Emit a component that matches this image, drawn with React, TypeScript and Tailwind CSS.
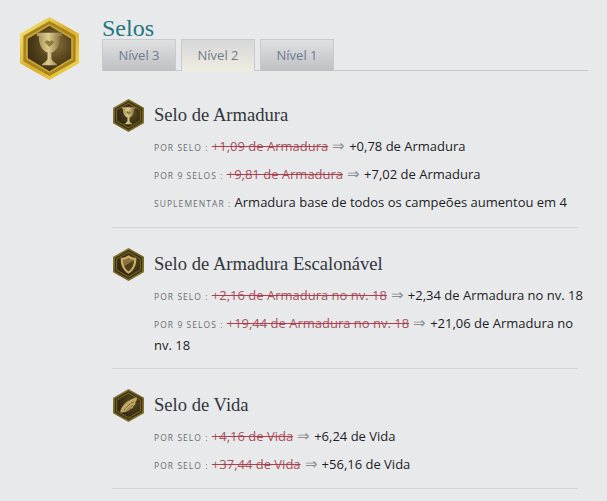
const serif = "font-['Georgia','Liberation_Serif',serif]";

function Hex({ size, big, children }: { size: number; big?: boolean; children: React.ReactNode }) {
  const id = big ? 'big' : 'small';
  return (
    <svg width={size} height={size} viewBox="0 0 64 64" className="shrink-0">
      <defs>
        <linearGradient id={`rim-${id}`} x1="0" y1="0" x2="1" y2="1">
          <stop offset="0" stopColor={big ? '#f6ee7a' : '#8f8138'} />
          <stop offset="0.5" stopColor={big ? '#d9ad2c' : '#6f5c22'} />
          <stop offset="1" stopColor={big ? '#f3dc4c' : '#8c7a32'} />
        </linearGradient>
        <radialGradient id={`core-${id}`} cx="0.62" cy="0.4" r="0.75">
          <stop offset="0" stopColor={big ? '#85703a' : '#5f4e22'} />
          <stop offset="0.55" stopColor={big ? '#54421c' : '#3c3114'} />
          <stop offset="1" stopColor={big ? '#33270f' : '#2a220e'} />
        </radialGradient>
        <linearGradient id={`cup-${id}`} x1="0" y1="0" x2="1" y2="0">
          <stop offset="0" stopColor="#a8925a" />
          <stop offset="0.45" stopColor="#dccc90" />
          <stop offset="1" stopColor="#86703a" />
        </linearGradient>
        <filter id={`soft-${id}`}>
          <feGaussianBlur stdDeviation="0.5" />
        </filter>
      </defs>
      <g filter={`url(#soft-${id})`}>
        <polygon points="32,0 62,17 62,47 32,64 2,47 2,17" fill={`url(#rim-${id})`} />
        <polygon points="32,4 58.5,19 58.5,45 32,60 5.5,45 5.5,19" fill={big ? '#a8821f' : '#3b3012'} />
        <polygon points="32,7 56,21 56,43 32,57 8,43 8,21" fill={big ? '#c9a636' : '#75652a'} />
        <polygon points="32,9 54,22 54,42 32,55 10,42 10,22" fill={`url(#core-${id})`} />
        <g fill={`url(#cup-${id})`} stroke="none">{children}</g>
      </g>
    </svg>
  );
}

const Cup = () => (
  <g>
    <rect x="19" y="16" width="26" height="3.5" rx="1" />
    <path d="M21 19 C21 30 26 35 30 36 V42 C30 45 26 46 24 49 H40 C38 46 34 45 34 42 V36 C38 35 43 30 43 19 Z" />
    <path d="M32 25 l2.5 -1.5 2.5 2 -5 5 -5 -5 2.5 -2 Z" fill="#8f7a3a" />
  </g>
);

const Shield = () => (
  <g>
    <path d="M32 14 C37 18 42 19 47 19 C48 32 43 44 32 50 C21 44 16 32 17 19 C22 19 27 18 32 14 Z" fill="#c9ae6a" />
    <path d="M32 19 C36 22 39 23 43 23 C43 32 39 41 32 45 C25 41 21 32 21 23 C25 23 28 22 32 19 Z" fill="#8a7238" />
    <path d="M42 24 C42 32 38 41 32 45 C27 42 25 38 24 35 Z" fill="#4e3f1e" />
  </g>
);

const Wing = () => (
  <g>
    <path d="M16 45 C17 34 29 21 48 16 C49 21 47 24 45 26 C46 29 44 32 41 33 C42 36 39 38 36 38 C33 43 23 47 16 45 Z" fill="#c2a868" />
    <path d="M23 42 C27 35 33 30 43 24 M28 42 C32 38 36 34 41 31" stroke="#6d5723" strokeWidth="1.5" fill="none" />
  </g>
);

function Tab({ label, active }: { label: string; active?: boolean }) {
  return (
    <div
      className={`w-[74px] h-[32px] -mb-px flex items-center justify-center border border-b-0 border-[#c9cacd] text-[13px] text-[#6f7a8c] ${
        active
          ? 'bg-gradient-to-b from-[#d6d7d9] to-[#f1ece0]'
          : 'bg-gradient-to-b from-[#dfe0e2] to-[#bfc0c4]'
      }`}
    >
      {label}
    </div>
  );
}

function Row({ label, oldText, newText }: { label: string; oldText?: string; newText: string }) {
  return (
    <p className="text-[13px] leading-[22px] text-[#1d1d24] mb-[6px]">
      <span className="text-[8.5px] leading-none tracking-[1.05px] uppercase text-[#6a6c74]">{label} : </span>
      {oldText && (
        <>
          <span className="line-through text-[#a8505c] decoration-[#a8404c]">{oldText}</span>
          <span className="text-[#8d8f94] text-[15px] leading-none mx-[4px]">⇒</span>
        </>
      )}
      {newText}
    </p>
  );
}

function Section({
  icon,
  title,
  children,
  pad,
}: {
  icon: React.ReactNode;
  title: string;
  children: React.ReactNode;
  pad: string;
}) {
  return (
    <section className={`border-b border-[#d3d4d6] ${pad}`}>
      <div className="flex items-center gap-[9px] mb-[3px]">
        <Hex size={33}>{icon}</Hex>
        <h3 className={`${serif} text-[18.6px] leading-[24px] pb-[2px] text-[#33363c]`}>{title}</h3>
      </div>
      <div className="pl-[42px] -mr-[10px]">{children}</div>
    </section>
  );
}

export default function App() {
  return (
    <div className="w-[607px] h-[501px] overflow-hidden bg-[#e8e9eb] font-['Open_Sans',sans-serif]">
      <div className="flex pt-[17px] pl-[18px] pr-[19px]">
        <Hex size={63} big>
          <Cup />
        </Hex>
        <div className="flex-1 ml-[21px]">
          <h2 className={`${serif} text-[24px] leading-[22px] text-[#23757f]`}>Selos</h2>
          <div className="flex gap-[5px] border-b border-[#c9cacd] h-[32px]">
            <Tab label="Nível 3" />
            <Tab label="Nível 2" active />
            <Tab label="Nível 1" />
          </div>
        </div>
      </div>
      <div className="ml-[112px] w-[466px] mt-[19px]">
        <Section icon={<Cup />} title="Selo de Armadura" pad="pb-[8px]">
          <Row label="Por selo" oldText="+1,09 de Armadura" newText="+0,78 de Armadura" />
          <Row label="Por 9 selos" oldText="+9,81 de Armadura" newText="+7,02 de Armadura" />
          <Row label="Suplementar" newText="Armadura base de todos os campeões aumentou em 4" />
        </Section>
        <Section icon={<Shield />} title="Selo de Armadura Escalonável" pad="pt-[20px] pb-[6px]">
          <Row label="Por selo" oldText="+2,16 de Armadura no nv. 18" newText="+2,34 de Armadura no nv. 18" />
          <Row label="Por 9 selos" oldText="+19,44 de Armadura no nv. 18" newText="+21,06 de Armadura no nv. 18" />
        </Section>
        <Section icon={<Wing />} title="Selo de Vida" pad="pt-[20px] pb-[7px]">
          <Row label="Por selo" oldText="+4,16 de Vida" newText="+6,24 de Vida" />
          <Row label="Por selo" oldText="+37,44 de Vida" newText="+56,16 de Vida" />
        </Section>
      </div>
    </div>
  );
}
